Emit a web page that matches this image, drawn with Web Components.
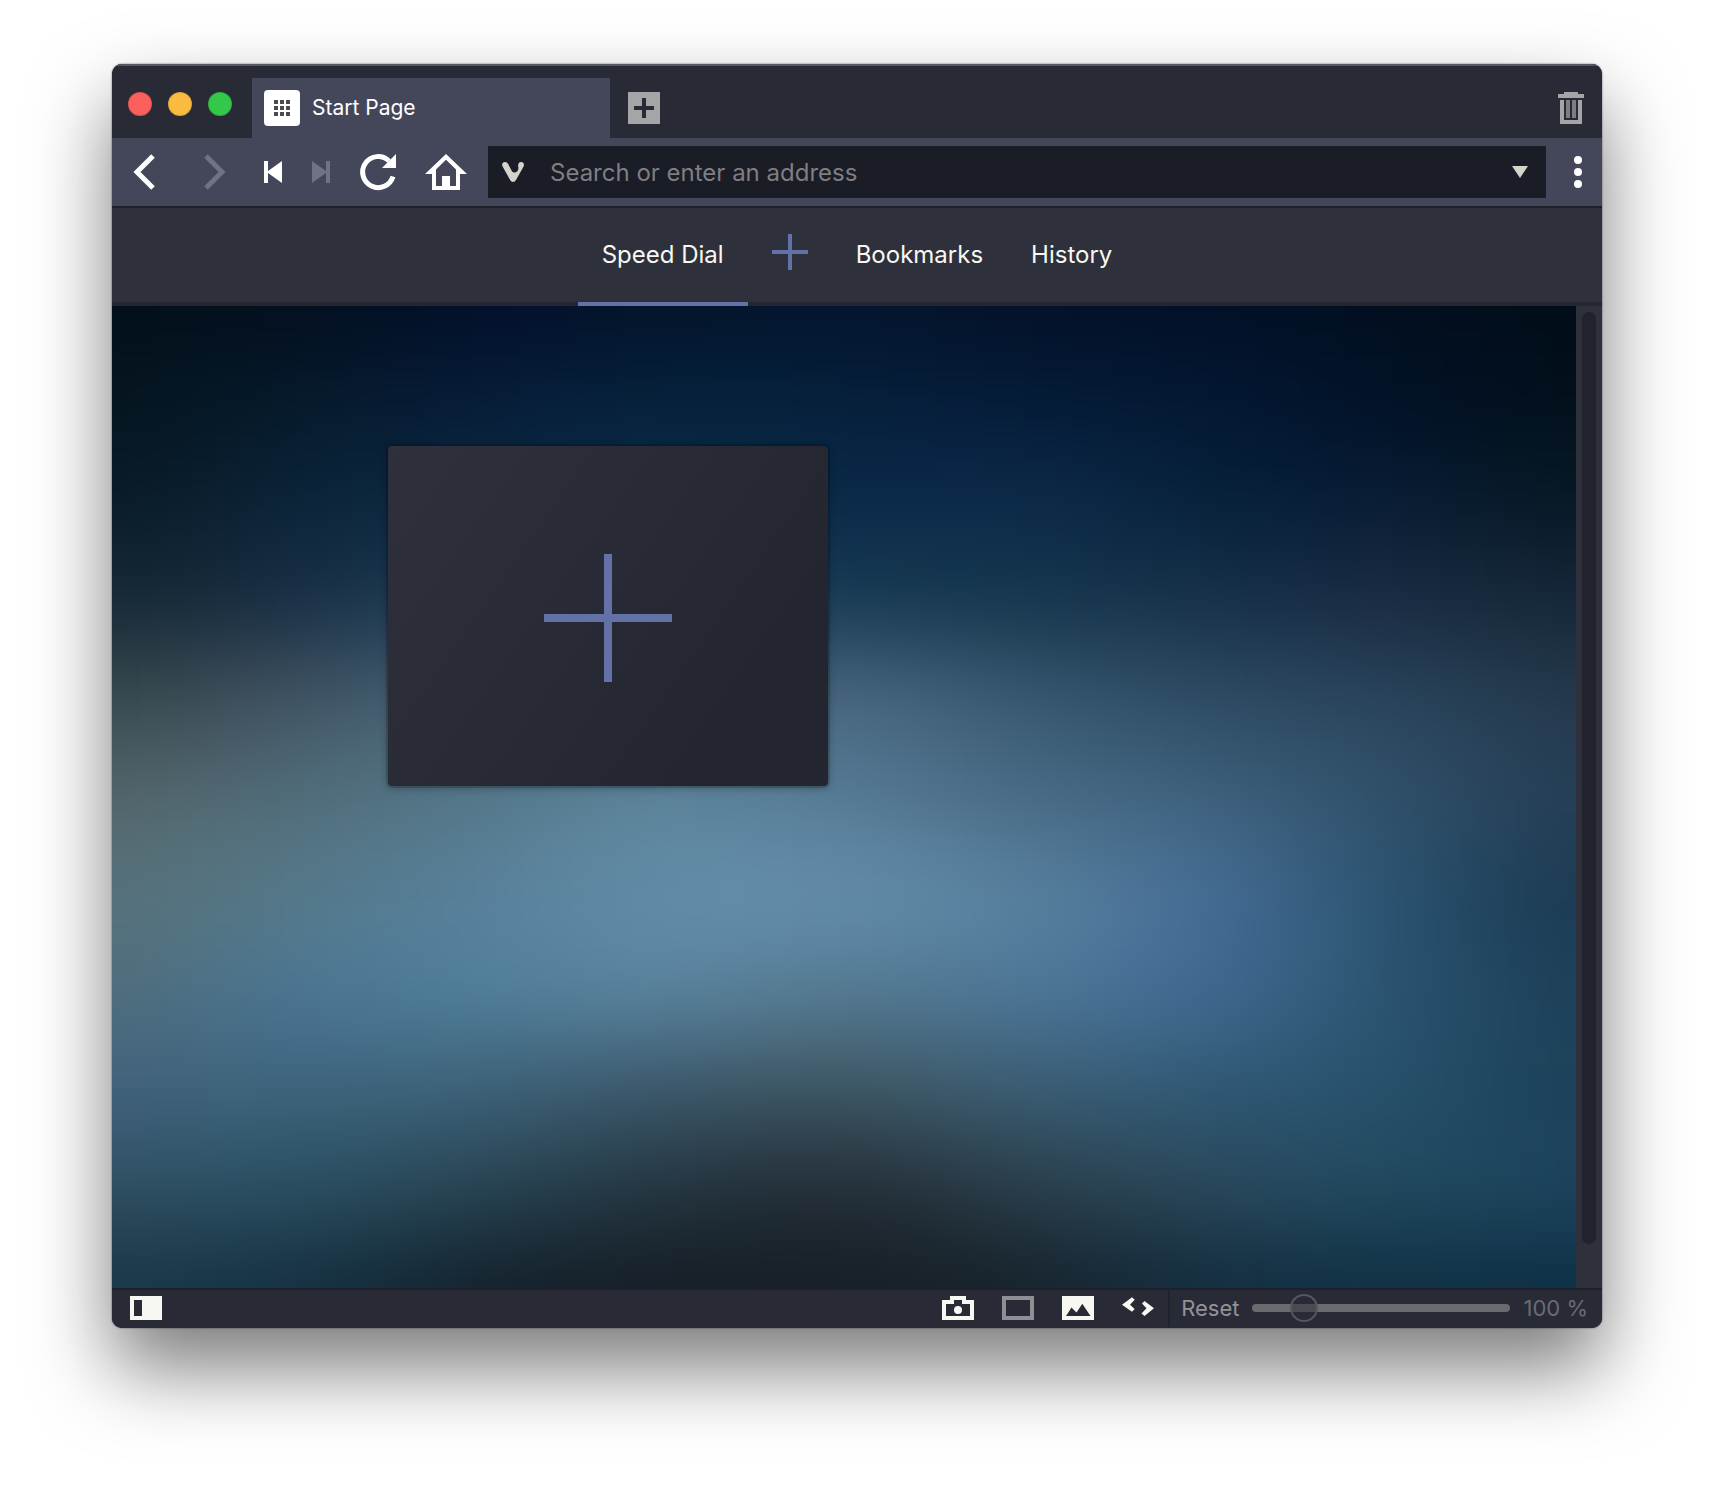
<!DOCTYPE html>
<html lang="en">
<head>
<meta charset="utf-8">
<title>Start Page</title>
<style>
  html, body { margin: 0; }
  body {
    display: flex;
    min-height: 100vh;
    box-sizing: border-box;
    padding: 64px 112px 160px;
    background: #fff;
    font-family: Inter, "Liberation Sans", sans-serif;
    --accent: #6272a6;
    --bar: #282a36;
    --chrome: #44475a;
    --panel: #2e303b;
    --line: #1e202c;
    --light: #f8f8f2;
  }
</style>
</head>
<body>
<browser-window>
  <tab-strip slot="top"><browser-tab>Start Page</browser-tab></tab-strip>
  <nav-toolbar slot="top"></nav-toolbar>
  <start-nav slot="top"></start-nav>
  <speed-dial></speed-dial>
  <status-bar slot="bottom"></status-bar>
</browser-window>

<script>
const base = `
  *, :host { box-sizing: border-box; }
  button { font: inherit; color: inherit; background: none; border: 0; padding: 0; margin: 0; display: flex; align-items: center; justify-content: center; }
  svg { display: block; flex: none; overflow: visible; }
`;
function define(name, css, html, setup) {
  customElements.define(name, class extends HTMLElement {
    constructor() {
      super();
      const root = this.attachShadow({ mode: 'open' });
      root.innerHTML = `<style>${base}${css}</style>${html}`;
      if (setup) setup(root);
    }
  });
}

define('browser-window', `
  :host { display: flex; flex-direction: column; flex: 1; min-width: 0; border-radius: 10px; overflow: hidden;
    background: var(--bar);
    box-shadow: 0 0 2px rgba(0,0,0,.6), 0 40px 80px rgba(0,0,0,.52); }
  main { flex: 1; display: flex; }
`, `<slot name="top"></slot><main><slot></slot></main><slot name="bottom"></slot>`);

define('traffic-lights', `
  :host { display: flex; gap: 16px; padding: 0 20px 8px 16px; }
  button { width: 24px; height: 24px; border-radius: 50%; border: 1px solid rgba(0,0,0,.12); }
  .close { background: #fc605c; } .min { background: #fabc40; } .max { background: #34c84a; }
`, `<button class="close" aria-label="Close"></button><button class="min" aria-label="Minimize"></button><button class="max" aria-label="Zoom"></button>`);

define('browser-tab', `
  :host { display: flex; flex: 0 1 358px; align-self: stretch; align-items: center; gap: 12px; padding: 0 12px;
    background: var(--chrome); color: #fff; font-size: 21px; line-height: 26px; }
`, `<svg width="36" height="36" aria-hidden="true"><rect width="36" height="36" rx="4" fill="#fff"/>
  <path d="M12 10v17M18 10v17M24 10v17" stroke="#4b4b4b" stroke-width="4" stroke-dasharray="4 2"/></svg><span><slot></slot></span>`);

define('tab-strip', `
  :host { display: flex; align-items: center; height: 74px; padding-top: 12px; border-top: 2px solid #565962; background: var(--bar); }
  .new { margin-left: 18px; }
  .trash { margin: 0 18px 0 auto; }
`, `<traffic-lights></traffic-lights><slot></slot>
  <button class="new" aria-label="New tab"><svg width="32" height="32"><path fill="#a4a5a7" fill-rule="evenodd" d="M0 0H32V32H0ZM14 6V14H6V18H14V26H18V18H26V14H18V6Z"/></svg></button>
  <button class="trash" aria-label="Closed tabs"><svg width="26" height="32"><path fill="#a4a5a7" d="M6 0H20V2H26V6H0V2H6ZM2 8H6V28H20V8H24V32H2Z"/><path fill="#7c7e84" d="M8 8H12V26H8ZM14 8H18V26H14Z"/></svg></button>`);

define('address-field', `
  :host { display: flex; flex: 1; min-width: 0; }
  label { flex: 1; min-width: 0; display: flex; align-items: center; height: 52px; padding: 0 18px 0 14px; background: #1a1c26; }
  input { flex: 1; min-width: 0; height: 52px; margin: 0 8px 0 0; padding: 0 0 0 26px; border: 0; outline: 0; background: none;
    font: inherit; font-size: 24px; color: #fff; }
  input::placeholder { color: #7e7f82; opacity: 1; }
`, `<label><svg width="22" height="20" fill="#d4d4cc" aria-hidden="true"><path d="M.6 4.6C-.8 2 1 0 3 0c1.800 0 2.600.9 3.400 2.400l3 5.800c.8 1.600 1.900 2.400 3.500 2.200 2.600-.3 3.900-2.600 3.400-5.200C15.700 2 16.800 0 19 0c2.400 0 3.700 2.200 2.600 4.500L14 18c-1.400 2.500-4.500 2.500-5.900 0Z"/></svg>
  <input type="text" placeholder="Search or enter an address" aria-label="Address">
  <button aria-label="Show history"><svg width="16" height="12"><path fill="#d4d4cc" d="M0 0H16L8 12Z"/></svg></button></label>`);

define('nav-toolbar', `
  :host { display: flex; align-items: center; height: 70px; background: var(--chrome); border-bottom: 2px solid var(--line); color: #fff; }
  button { width: 68px; height: 52px; }
  .small { width: 48px; }
  .off { color: #6f7282; }
  .menu { width: 56px; }
  address-field { margin-left: 8px; }
`, `
  <button aria-label="Back"><svg width="40" height="40"><path d="M27 4L11 20L27 36" fill="none" stroke="currentColor" stroke-width="5"/></svg></button>
  <button class="off" aria-label="Forward" disabled><svg width="40" height="40"><path d="M12 4L28 20L12 36" fill="none" stroke="currentColor" stroke-width="5"/></svg></button>
  <button class="small" aria-label="Rewind"><svg width="40" height="40"><path fill="currentColor" d="M12 9H16V19L30 9V31L16 21V31H12Z"/></svg></button>
  <button class="small off" aria-label="Fast forward" disabled><svg width="40" height="40"><path fill="currentColor" d="M30 9H26V19L12 9V31L26 21V31H30Z"/></svg></button>
  <button aria-label="Reload"><svg width="40" height="40"><path d="M35 24.500A15.500 15.500 0 1 1 31 9" fill="none" stroke="currentColor" stroke-width="5"/><path fill="currentColor" d="M38 2V16H24Z"/></svg></button>
  <button aria-label="Home"><svg width="40" height="40"><path fill="currentColor" fill-rule="evenodd" d="M20 2L41 22H34V38H6V22H-1ZM20 7.800L10 17.500V34H16V24H24V34H30V17.500Z"/></svg></button>
  <address-field></address-field>
  <button class="menu" aria-label="Menu"><svg width="40" height="40" fill="currentColor"><circle cx="24" cy="8" r="4"/><circle cx="24" cy="20" r="4"/><circle cx="24" cy="32" r="4"/></svg></button>`);

define('start-nav', `
  :host { display: block; background: var(--panel); }
  nav { display: flex; justify-content: center; height: 98px; box-shadow: inset 0 -4px #25262f; color: var(--light); font-size: 24px; line-height: 28px; }
  a, button { display: flex; align-items: center; padding: 0 24px; color: inherit; text-decoration: none; }
  a { border-bottom: 4px solid transparent; }
  a.on { border-color: var(--accent); }
  button { padding-bottom: 10px; }
`, `<nav><a class="on" href="#dial">Speed Dial</a>
  <button aria-label="Add folder"><svg width="36" height="36"><path fill="var(--accent)" d="M16 0H20V16H36V20H20V36H16V20H0V16H16Z"/></svg></button>
  <a href="#bookmarks">Bookmarks</a><a href="#history">History</a></nav>`);

/* Soft out-of-focus wallpaper: a coarse colour mesh, interpolated and blurred. */
const mesh = [
  '03101b 031020 03112b 04142c 04152e 04122a 021028 020f20 010d18',
  '051520 061a2c 071d38 06223c 06203c 051c38 041832 021228 03111c',
  '0b1c28 0c2439 0d2b42 0c2e4a 0b2a48 0c2a48 08223c 091d34 081926',
  '172a35 1c3147 1e3f55 204460 1c3d56 183850 17324a 1a2c43 152839',
  '38484f 3f5362 436178 426280 46647e 375770 2d4b63 28435a 24384c',
  '52646a 506c7a 547789 5b8299 567a94 496b85 3d607c 2f4f69 243e55',
  '55707a 547889 58809a 608aa5 618aa7 557e9c 446b92 2b526f 1c3b53',
  '4e6d7c 4b7490 4f7c96 577f99 53788f 4c7494 3e678e 2a536f 1e4059',
  '40617a 3d637b 3c6076 3b576a 3c5562 3a5b71 305873 264f69 1c425a',
  '2e4e60 294d5f 274252 243641 24303a 293d4a 284659 20475d 1b425a',
  '1a384a 163143 14242f 161f28 171f25 17242e 142e40 113144 0f3046'
].map(r => r.split(' ').map(h => [0, 2, 4].map(i => parseInt(h.slice(i, i + 2), 16))));

const clamp = (v, a, b) => Math.max(a, Math.min(b, v));
const cubic = (p, t) => p[1] + t * (p[2] - p[0] + t * (2 * p[0] - 5 * p[1] + 4 * p[2] - p[3] + t * (3 * (p[1] - p[2]) + p[3] - p[0]))) / 2;
function sample(x, y, c) {
  const X = Math.min(Math.floor(x), 7), Y = Math.min(Math.floor(y), 9), k = [-1, 0, 1, 2];
  return cubic(k.map(j => cubic(k.map(i => mesh[clamp(Y + j, 0, 10)][clamp(X + i, 0, 8)][c]), x - X)), y - Y);
}
define('blur-wallpaper', `
  :host { display: block; overflow: hidden; }
  svg { width: 100%; height: 100%; overflow: hidden; }
`, `<svg viewBox="0 0 32 40" preserveAspectRatio="none" aria-hidden="true">
  <filter id="soft" filterUnits="userSpaceOnUse" x="-3" y="-3" width="38" height="46" color-interpolation-filters="sRGB"><feGaussianBlur stdDeviation=".8"/></filter>
  <g filter="url(#soft)"></g></svg>`, root => {
  let out = '';
  for (let y = -3; y < 43; y++) for (let x = -3; x < 35; x++) {
    const u = clamp((x + .5) / 4, 0, 8), v = clamp((y + .5) / 4, 0, 10);
    const rgb = [0, 1, 2].map(c => Math.round(clamp(sample(u, v, c), 0, 255)));
    out += `<rect x="${x}" y="${y}" width="1.1" height="1.1" fill="rgb(${rgb})"/>`;
  }
  root.querySelector('g').innerHTML = out;
});

define('speed-dial', `
  :host { flex: 1; display: flex; min-width: 0; }
  .page { flex: 1; display: grid; min-width: 0; }
  .page > * { grid-area: 1 / 1; min-width: 0; min-height: 0; }
  blur-wallpaper { contain: size; }
  .tiles { z-index: 1; display: grid; grid-template-columns: repeat(2, minmax(0, 440px)); gap: 32px; justify-content: center; align-content: start; padding: 140px 24px; }
  .tile { height: 340px; padding-top: 4px; border-radius: 4px; background: linear-gradient(125deg, #2e303b, #282a35 45%, #23252f 80%);
    box-shadow: 0 0 0 2px rgba(0,0,0,.14), 0 2px 8px rgba(0,0,0,.3); }
  .scroll { width: 26px; display: flex; padding: 6px 6px 44px; background: var(--panel); }
  .thumb { width: 14px; border-radius: 7px; background: #21222d; }
`, `<div class="page"><blur-wallpaper></blur-wallpaper>
  <div class="tiles"><button class="tile" aria-label="Add speed dial"><svg width="128" height="128"><path fill="var(--accent)" d="M60 0H68V60H128V68H68V128H60V68H0V60H60Z"/></svg></button></div></div>
  <div class="scroll"><div class="thumb"></div></div>`);

define('zoom-control', `
  :host { display: flex; align-items: center; height: 38px; padding: 0 14px 0 11px; border-left: 2px solid #20222d; font-size: 22px; line-height: 26px; }
  .reset { width: auto; color: #929398; }
  output { color: #696b74; white-space: nowrap; }
  input { -webkit-appearance: none; appearance: none; width: 258px; height: 28px; margin: 0 14px 0 12px; background: none; }
  input::-webkit-slider-runnable-track { height: 8px; border-radius: 4px; background: #6a6b6f; }
  input::-webkit-slider-thumb { -webkit-appearance: none; width: 28px; height: 28px; margin-top: -10px; border-radius: 50%; border: 2px solid #555762; background: rgba(40,42,54,.5); }
`, `<button class="reset">Reset</button>
  <input type="range" min="20" max="500" value="100" aria-label="Page zoom"><output>100 %</output>`);

define('status-bar', `
  :host { display: flex; align-items: center; height: 40px; padding-bottom: 2px; border-top: 2px solid var(--line); background: var(--bar); color: var(--light); }
  button { width: 60px; height: 36px; }
  .panel { width: 68px; margin-right: auto; }
  .dim { color: #8e8f93; }
`, `
  <button class="panel" aria-label="Toggle panel"><svg width="32" height="24"><path fill="currentColor" fill-rule="evenodd" d="M0 0H32V24H0ZM4 4V20H12V4Z"/></svg></button>
  <button aria-label="Capture page"><svg width="32" height="24" fill="currentColor"><path fill-rule="evenodd" d="M8 0H24V4H32V24H0V4H8ZM12 4V8H4V20H28V8H20V4Z"/><circle cx="16" cy="14" r="4"/></svg></button>
  <button class="dim" aria-label="Tile tabs"><svg width="32" height="24"><path fill="currentColor" fill-rule="evenodd" d="M0 0H32V24H0ZM4 4V20H28V4Z"/></svg></button>
  <button aria-label="Toggle images"><svg width="32" height="24"><path fill="currentColor" fill-rule="evenodd" d="M0 0H32V24H0ZM4 20H28.500L20.300 7.700L14.500 16.500L9.500 11.500Z"/></svg></button>
  <button aria-label="Page actions"><svg width="32" height="24" fill="currentColor"><path d="M0 8.700L10 1.300L12.700 3.800L8 8.700L12.700 13L10 15.700ZM22.500 5L32 12.300L22.500 20L19.500 17.500L24.500 12.300L20 7.500Z"/></svg></button>
  <zoom-control></zoom-control>`);
</script>
</body>
</html>
